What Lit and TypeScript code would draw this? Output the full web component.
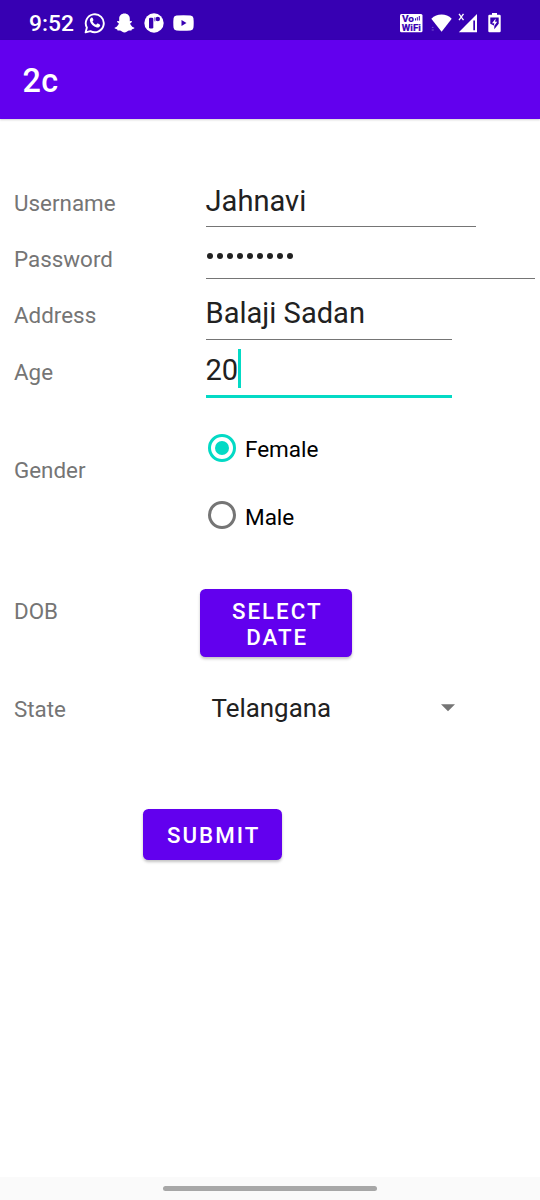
import { LitElement, html, css, svg } from "lit";
import { customElement, state } from "lit/decorators.js";

const whatsapp = svg`
  <svg class="i-chat" width="22" height="22" viewBox="0 0 22 22" fill="none">
    <path d="M1.6 20.4 2.9 15.6A9 9 0 1 1 6.4 19.1Z" stroke="#fff" stroke-width="1.9" stroke-linejoin="round"/>
    <path d="M7.2 5.8c.5-.5 1.2-.4 1.5.2l.7 1.7c.1.4 0 .7-.3 1l-.6.7c.8 1.6 2 2.7 3.6 3.4l.9-1c.3-.3.6-.4 1-.2l1.7.8c.5.3.6.7.4 1.3-.5 1.4-1.8 2-3.2 1.7-3.6-.8-6.3-3.5-7-6.6-.2-1.2.5-2.4 1.3-3Z" fill="#fff"/>
  </svg>`;

const ghost = svg`
  <svg class="i-ghost" width="21" height="20" viewBox="0 0 21 20">
    <path fill="#fff" d="M10.500.500c3.200 0 5.300 2.100 5.300 5.200v2.500c.8.100 1.800-.5 2.100.2.300.8-1.200 1.200-1.700 1.800-.2.500 1.300 3.700 3.800 4.200.5.200.5.700.1 1-.8.500-1.900.6-2.200.9-.3.400 0 1-.7 1.100-.8.100-1.900-.2-3 .3-1 .5-1.900 1.700-3.700 1.700s-2.700-1.200-3.700-1.700c-1.100-.5-2.200-.2-3-.3-.7-.1-.4-.7-.7-1.100-.3-.3-1.400-.4-2.200-.9-.4-.3-.4-.8.1-1 2.500-.5 4-3.700 3.800-4.200-.5-.6-2-1-1.700-1.800.3-.7 1.300-.1 2.100-.2V5.700C5.200 2.600 7.300.5 10.500.5Z"/>
  </svg>`;

const disc = svg`
  <svg class="i-disc" width="20" height="20" viewBox="0 0 20 20">
    <circle cx="10" cy="10" r="9.700" fill="#fff"/>
    <path d="M5 6q0-1.300 1.300-1.300H8q1.300 0 1.300 1.300v8.300q0 1.300-1.300 1.300H6.300Q5 15.600 5 14.300Z" fill="#3700b3"/>
    <path d="M10.900 4.300v4" stroke="#3700b3" stroke-width=".8"/>
    <circle cx="13.800" cy="6" r="2.200" fill="#3700b3"/>
  </svg>`;

const video = svg`
  <svg class="i-video" width="21" height="16" viewBox="0 0 21 16">
    <path fill="#fff" d="M3.500.500Q10.500-.2 17.500.500q2.500.2 2.900 2.500.6 5 0 10-.4 2.300-2.900 2.500-7 .7-14 0Q1 15.300.6 13 0 8 .6 3 1 .700 3.500.500Z"/>
    <path fill="#3700b3" d="M8.500 5v6l5-3Z"/>
  </svg>`;

const voWifi = svg`
  <svg class="i-vowifi" width="23" height="19" viewBox="0 0 23 19">
    <rect x="0" y="0" width="22.500" height="18.300" rx="1.500" fill="#fff"/>
    <g fill="#3700b3" stroke="#3700b3" stroke-width=".2" font-family="Roboto, sans-serif" font-weight="700">
      <text x="2" y="8.300" font-size="9" textLength="12" lengthAdjust="spacingAndGlyphs">Vo</text>
      <text x="1.800" y="16.500" font-size="9" textLength="19" lengthAdjust="spacingAndGlyphs">WiFi</text>
    </g>
    <path d="M15.500 4.300v2.200M17.300 3.200v3.300M19.300 2v4.500" stroke="#3700b3" stroke-width="1"/>
  </svg>`;

const wifi = svg`
  <svg class="i-wifi" width="21" height="18" viewBox="0 0 21 18">
    <path fill="#fff" d="M.3 4.700Q4.800.5 10.600.500T20.700 4.700L10.600 17.700Z"/>
    <path d="M.9 13.400h1.600M.7 16h2.100" stroke="#7d5bd0" stroke-width=".9"/>
  </svg>`;

const signal = svg`
  <svg class="i-signal" width="20" height="20" viewBox="0 0 20 20">
    <path d="M1 .9 5.500 7.200M5.500.9 1 7.200" stroke="#fff" stroke-width="1.300"/>
    <path d="M.8 19.300 19 1v18.300Z" fill="#fff"/>
    <path d="M15.300 7.500h1.700v9.800h-1.700Z" fill="#3700b3"/>
  </svg>`;

const battery = svg`
  <svg class="i-battery" width="13" height="20" viewBox="0 0 13 20">
    <path fill="#fff" d="M4 0h5v1.800h2.500Q12.700 1.800 12.700 3v15q0 1.300-1.200 1.300h-10Q.3 19.300.3 18V3q0-1.200 1.200-1.200H4Z"/>
    <path fill="#3700b3" d="M2.300 4.500h8.400v6.300L6.300 16.300v-3.500L2.300 10.800Z"/>
    <path fill="#fff" d="M7.700 5.500 4 10.300h2.200l-.2 3 3.200-4.500H7.100Z"/>
  </svg>`;

@customElement("app-root")
export class AppRoot extends LitElement {
  @state() private gender = "Female";

  static styles = css`
    :host {
      display: flex;
      flex-direction: column;
      width: 540px;
      height: 1200px;
      overflow: hidden;
      background: #fff;
      font-family: Roboto, sans-serif;
      color: #212121;
    }
    svg { display: block; flex: none; }
    .status {
      display: flex;
      box-sizing: border-box;
      height: 40px;
      padding: 0 39px 0 29px;
      background: #3700b3;
      color: #fff;
    }
    .clock {
      width: 55px;
      font-size: 22.800px;
      line-height: 47px;
      font-weight: 500;
      white-space: nowrap;
    }
    .i-chat { margin-top: 12px; }
    .i-ghost { margin: 13px 0 0 8px; }
    .i-disc { margin: 13px 0 0 9px; }
    .i-video { margin: 15px 0 0 9px; }
    .i-vowifi { margin: 14px 0 0 auto; }
    .i-wifi { margin: 14px 0 0 8px; }
    .i-signal { margin: 13px 0 0 6px; }
    .i-battery { margin: 13px 0 0 10px; }
    .bar {
      height: 79px;
      padding-left: 22.500px;
      background: #6200ee;
      color: #fff;
      font-size: 32.300px;
      line-height: 82px;
      font-weight: 500;
      letter-spacing: .4px;
      box-shadow: 0 1px 2px rgba(0, 0, 0, .18);
    }
    .form {
      flex: 1;
      padding: 55px 0 0 14px;
    }
    .row {
      display: grid;
      grid-template-columns: 191.500px 1fr;
      align-items: start;
      height: 56.300px;
    }
    .label {
      margin-top: 14.900px;
      font-size: 22.400px;
      line-height: 28px;
      color: #757575;
    }
    .field {
      display: flex;
      box-sizing: border-box;
      padding-top: 8.500px;
      height: 53.300px;
      border-bottom: 1.400px solid #757575;
      font-size: 29.100px;
      line-height: 36px;
      white-space: pre;
    }
    .w-name { width: 270.500px; }
    .w-pass { width: 329px; height: 48.500px; }
    .w-mid { width: 246.500px; }
    .focus { height: 55.400px; padding-top: 8.800px; border-bottom: 3px solid #03dac5; }
    .dots { display: flex; gap: 4px; padding: 14px 0 0 1.500px; }
    .dot { width: 6px; height: 6px; border-radius: 50%; background: #212121; }
    .caret { width: 3px; height: 39px; margin-top: -3px; background: #03dac5; }
    .gender { height: 184px; }
    .gender .label { margin-top: 56.900px; }
    .radios { padding: 34.500px 0 0 2.800px; }
    .radio {
      display: flex;
      align-items: center;
      height: 28px;
      margin-bottom: 39.500px;
      font-size: 22.500px;
      color: #000;
    }
    .ring {
      display: flex;
      align-items: center;
      justify-content: center;
      box-sizing: border-box;
      width: 28px;
      height: 28px;
      margin-right: 8.700px;
      border: 3px solid #757575;
      border-radius: 50%;
    }
    .ring.on { border-color: #03dac5; }
    .pip { width: 14px; height: 14px; border-radius: 50%; background: #03dac5; }
    .option { line-height: 28px; padding-top: 3px; }
    .button {
      box-sizing: border-box;
      border: 0;
      padding: 0;
      border-radius: 5.500px;
      background: #6200ee;
      color: #fff;
      font: 500 22.300px/26.500px Roboto, sans-serif;
      letter-spacing: 2px;
      text-align: center;
      box-shadow: 0 2px 3px rgba(0, 0, 0, .24);
    }
    .dob { height: 99px; }
    .dob .label { margin-top: 13.400px; }
    .pick { width: 152px; height: 68px; margin: 6px 0 0 -5.500px; padding: 2px 0 0 2.500px; }
    .state { height: 127px; }
    .state .label { margin-top: 13px; }
    .spinner {
      display: flex;
      padding: 10px 0 0 6px;
      font-size: 25.900px;
      line-height: 32px;
    }
    .choice { width: 229.300px; }
    .arrow { margin-top: 11.500px; }
    .submit { width: 139px; height: 51px; margin-left: 129.400px; padding: 2px 0 0 1.500px; }
    .nav {
      display: flex;
      justify-content: center;
      box-sizing: border-box;
      height: 23px;
      padding-top: 9px;
      background: #fafafa;
    }
    .pill { width: 214px; height: 5px; border-radius: 3px; background: #a7a7a7; }
  `;

  private radio(name: string) {
    const on = this.gender === name;
    return html`<div class="radio" @click=${() => (this.gender = name)}>
      <span class="ring ${on ? "on" : ""}">${on ? html`<span class="pip"></span>` : ""}</span>
      <span class="option">${name}</span>
    </div>`;
  }

  render() {
    return html`
      <div class="status">
        <div class="clock">9:52</div>
        ${whatsapp}${ghost}${disc}${video}
        ${voWifi}${wifi}${signal}${battery}
      </div>
      <div class="bar">2c</div>
      <div class="form">
        <div class="row"><div class="label">Username</div><div class="field w-name">Jahnavi</div></div>
        <div class="row">
          <div class="label">Password</div>
          <div class="field w-pass"><div class="dots">${Array.from({ length: 9 }, () => html`<span class="dot"></span>`)}</div></div>
        </div>
        <div class="row"><div class="label">Address</div><div class="field w-mid">Balaji Sadan</div></div>
        <div class="row"><div class="label">Age</div><div class="field w-mid focus">20<span class="caret"></span></div></div>
        <div class="row gender">
          <div class="label">Gender</div>
          <div class="radios">${this.radio("Female")}${this.radio("Male")}</div>
        </div>
        <div class="row dob"><div class="label">DOB</div><button class="button pick">SELECT<br>DATE</button></div>
        <div class="row state">
          <div class="label">State</div>
          <div class="spinner">
            <span class="choice">Telangana</span>
            <svg class="arrow" width="14" height="8" viewBox="0 0 14 8"><path d="M0 .3h14l-7 7Z" fill="#757575"/></svg>
          </div>
        </div>
        <button class="button submit">SUBMIT</button>
      </div>
      <div class="nav"><div class="pill"></div></div>
    `;
  }
}
